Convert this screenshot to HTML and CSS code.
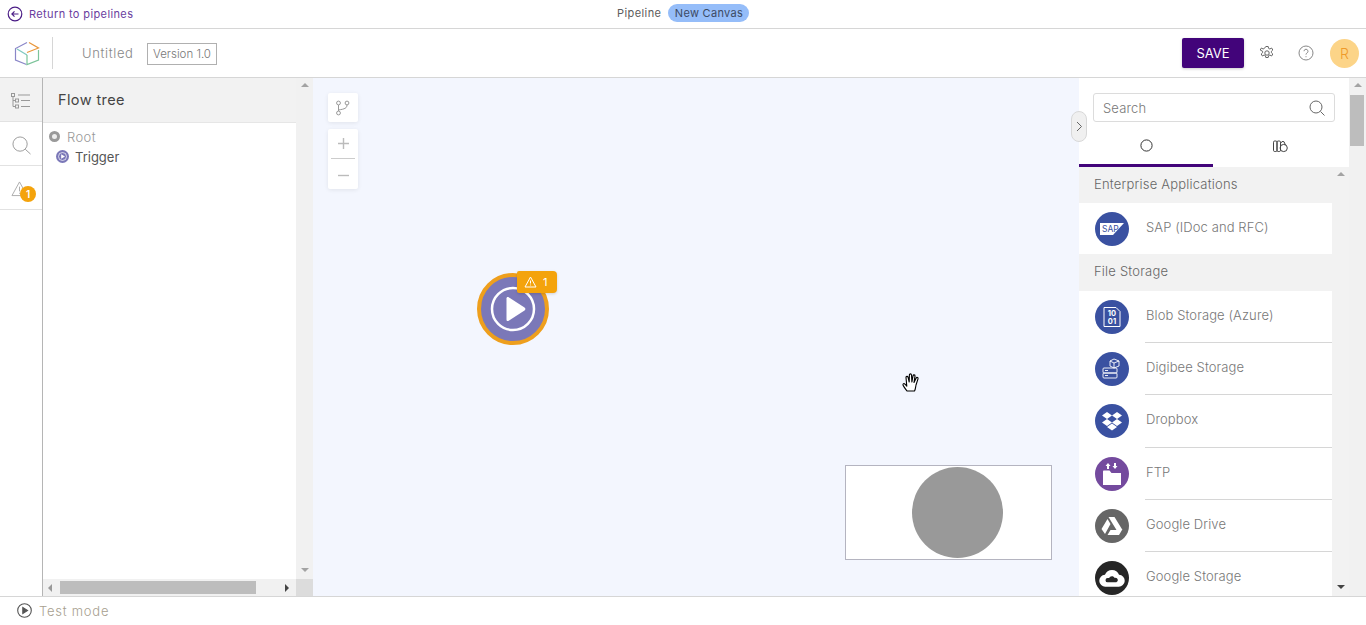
FILE: index.html
```html
<!DOCTYPE html>
<html>
<head>
    <meta charset="UTF-8">
    <title>Pipeline - New Canvas</title>
    <link rel="stylesheet" href="styles.css">
</head>
<body>
    <div class="topbar">
        <a class="back" href="#">
            <svg width="16" height="16" viewBox="0 0 16 16" fill="none" stroke="#4b1d86" stroke-width="1.2"><circle cx="8" cy="8" r="6.8"/><path d="M11.5 8H5M7.5 5.4 4.9 8l2.6 2.6"/></svg>
            <span>Return to pipelines</span>
        </a>
        <div class="crumb">
            <span>Pipeline</span>
            <span class="pill">New Canvas</span>
        </div>
    </div>

    <div class="header">
        <div class="logo">
            <svg width="26" height="25" viewBox="0 0 26 25" fill="none" stroke-width="1.2">
                <path d="M13 1.500 1.500 7.500V19L12.500 23.500" stroke="#8a86c8"/>
                <path d="M3 8l10 6" stroke="#7fc8c0"/>
                <path d="M13 14v9.500L24.500 19V9" stroke="#7cc49a"/>
                <path d="M15 1.500 24.500 7 13 11.500" stroke="#e8963a"/>
            </svg>
        </div>
        <span class="title">Untitled</span>
        <span class="version">Version 1.0</span>
        <div class="header-right">
            <button class="save">SAVE</button>
            <svg class="gear" width="16" height="16" viewBox="0 0 16 16" fill="none" stroke="#666" stroke-width="1"><circle cx="8" cy="8" r="2.2"/><path d="M6.8 1.5h2.4l.4 1.9 1.3.6 1.7-1 1.2 2-1.4 1.3v1.4l1.4 1.3-1.2 2-1.7-1-1.3.6-.4 1.9H6.8l-.4-1.9-1.3-.6-1.7 1-1.2-2 1.4-1.3V6.3L1.2 5l1.2-2 1.7 1 1.3-.6z"/></svg>
            <svg class="help" width="16" height="16" viewBox="0 0 16 16" fill="none" stroke="#888" stroke-width="1"><circle cx="8" cy="8" r="7"/><path d="M6 6.2a2 2 0 1 1 3 1.8c-.7.4-1 .8-1 1.6M8 11.2v1"/></svg>
            <span class="avatar">R</span>
        </div>
    </div>

    <div class="main">
        <div class="rail">
            <div class="rail-item active">
                <svg width="20" height="16" viewBox="0 0 20 16" fill="none" stroke="#999" stroke-width="1"><rect x="0.5" y="0.5" width="3" height="3"/><rect x="4.5" y="6" width="3" height="3"/><rect x="4.5" y="12" width="3" height="3"/><path d="M2 4v9.500h2.500M2 7.500h2.500M7 2h12M10 7.500h9M10 13.500h9"/></svg>
            </div>
            <div class="rail-item search-item">
                <svg width="19" height="19" viewBox="0 0 20 20" fill="none" stroke="#999" stroke-width="1"><circle cx="8.500" cy="8.500" r="7.500"/><path d="M14 14l5.500 5"/></svg>
            </div>
            <div class="rail-item warn">
                <svg width="17" height="16" viewBox="0 0 18 17" fill="none" stroke="#aaa" stroke-width="1"><path d="M9 1 1 15.500h16zM9 6v5M9 12.500v1"/></svg>
                <span class="rail-badge">1</span>
            </div>
        </div>

        <div class="tree-panel">
            <div class="tree-body">
                <div class="tree-head">Flow tree</div>
                <div class="tree-list">
                    <div class="tree-row root"><span class="dot-root"></span>Root</div>
                    <div class="tree-row trigger">
                        <svg width="13" height="13" viewBox="0 0 13 13"><circle cx="6.500" cy="6.500" r="6.500" fill="#7b78b8"/><circle cx="6.500" cy="6.500" r="4" fill="none" stroke="#fff" stroke-width=".7"/><path d="M5.200 4.200v4.600l3.800-2.300z" fill="#fff"/></svg>
                        Trigger
                    </div>
                </div>
                <div class="hscroll">
                    <span class="arrow-left"></span>
                    <span class="hthumb"></span>
                    <span class="arrow-right"></span>
                </div>
            </div>
            <div class="vscroll">
                <span class="arrow-up"></span>
                <span class="arrow-down"></span>
            </div>
        </div>

        <div class="canvas">
            <div class="tool tool-branch">
                <svg width="16" height="16" viewBox="0 0 16 16" fill="none" stroke="#999" stroke-width="1"><circle cx="3.500" cy="3" r="1.900"/><circle cx="12" cy="3" r="1.900"/><circle cx="3.500" cy="13" r="1.900"/><path d="M3.500 5v6M12 5c0 3-2 4-8.500 5"/></svg>
            </div>
            <div class="tool tool-zoom">
                <span class="zoom-btn">
                    <svg width="13" height="13" viewBox="0 0 13 13" stroke="#bbb" stroke-width="1.400"><path d="M6.500 1v11M1 6.500h11"/></svg>
                </span>
                <span class="zoom-line"></span>
                <span class="zoom-btn minus">
                    <svg width="13" height="13" viewBox="0 0 13 13" stroke="#bbb" stroke-width="1.400"><path d="M1 6.500h11"/></svg>
                </span>
            </div>

            <div class="node">
                <svg width="72" height="72" viewBox="0 0 72 72">
                    <circle cx="36" cy="36" r="34" fill="#7b78b8" stroke="#ee9f1d" stroke-width="4"/>
                    <circle cx="36" cy="36" r="21" fill="none" stroke="#fff" stroke-width="2.500"/>
                    <path d="M29.500 25.500c0-1.500 1-2 2.200-1.300l15.800 10.200c1.200.8 1.200 2.200 0 3L31.700 47.800c-1.200.7-2.200.2-2.200-1.300z" fill="#fff"/>
                </svg>
                <span class="node-badge">
                    <svg width="13" height="12" viewBox="0 0 13 12" fill="none" stroke="#fff" stroke-width="1"><path d="M6.500 1 1 11h11zM6.500 4.500v3M6.500 8.600v.8"/></svg>
                    1
                </span>
            </div>

            <div class="minimap"><span class="minimap-node"></span></div>

            <svg class="hand" width="20" height="22" viewBox="0 0 20 22">
                <path d="M5 19c-1.500-2-3.500-4.500-4-6-.3-1.200 1-1.800 2-.8l1.800 2L4 5.500c-.1-1.400 1.800-1.600 2.100-.2L7.200 10 7.400 3c0-1.500 2-1.500 2.100 0l.4 7 1.100-6.200c.3-1.400 2.200-1.100 2 .3L12 10.500l2.200-4.500c.6-1.200 2.300-.5 1.800.8L14 13c-.4 2-.6 4.500-1.500 6z" fill="#fff" stroke="#000" stroke-width="1.100" stroke-linejoin="round"/>
            </svg>
        </div>

        <div class="side">
            <button class="collapse">
                <svg width="7" height="11" viewBox="0 0 7 11" fill="none" stroke="#666" stroke-width="1"><path d="M1 1l4.500 4.500L1 10"/></svg>
            </button>
            <div class="side-inner">
                <div class="side-top">
                    <div class="search">
                        <span>Search</span>
                        <svg width="16" height="16" viewBox="0 0 16 16" fill="none" stroke="#666" stroke-width="1"><circle cx="7" cy="7" r="6"/><path d="M11.500 11.500l4 4"/></svg>
                    </div>
                    <div class="tabs">
                        <div class="tab active">
                            <svg width="13" height="13" viewBox="0 0 13 13" fill="none" stroke="#333" stroke-width="1"><circle cx="6.500" cy="6.500" r="5.600"/></svg>
                        </div>
                        <div class="tab">
                            <svg width="15" height="13" viewBox="0 0 15 13" fill="none" stroke="#444" stroke-width="1"><rect x="0.500" y="1" width="3.500" height="10.500" rx="1.200"/><rect x="4" y="1" width="3.500" height="10.500" rx="1.200"/><circle cx="10.700" cy="8" r="3.600"/><path d="M7.500 3.500l1.500-2 2 .2 1.500 3.500"/></svg>
                        </div>
                    </div>
                </div>
                <div class="list-wrap">
                    <div class="list">
                        <div class="group">Enterprise Applications</div>
                        <div class="item last">
                            <span class="icon blue"><svg width="24" height="14" viewBox="0 0 24 14"><path d="M0 1h24L13 13H0z" fill="#fff"/></svg><b class="sap">SAP</b></span>
                            <span class="label">SAP (IDoc and RFC)</span>
                        </div>
                        <div class="group second">File Storage</div>
                        <div class="item">
                            <span class="icon blue">
                                <svg width="20" height="22" viewBox="0 0 20 22" fill="none" stroke="#fff" stroke-width="1"><path d="M2 1.500h12l4 4v15H2z"/><text x="10" y="10" fill="#fff" stroke="none" font-size="7.500" font-weight="700" text-anchor="middle">10</text><text x="10" y="17.500" fill="#fff" stroke="none" font-size="7.500" font-weight="700" text-anchor="middle">01</text></svg>
                            </span>
                            <span class="label">Blob Storage (Azure)</span>
                        </div>
                        <div class="item">
                            <span class="icon blue">
                                <svg width="20" height="22" viewBox="0 0 20 22" fill="none" stroke="#fff" stroke-width=".9"><path d="M12 1l5 2v5l-5 2-4-2V3zM8 3l4 2 5-2M12 5v5"/><rect x="1" y="10" width="14" height="5" rx="1"/><rect x="1" y="15" width="14" height="5" rx="1"/><path d="M3 12.500h3M3 17.500h3"/></svg>
                            </span>
                            <span class="label">Digibee Storage</span>
                        </div>
                        <div class="item">
                            <span class="icon blue">
                                <svg width="22" height="20" viewBox="0 0 22 20" fill="#fff"><path d="M6 1 1 4.500 6 8l5-3.500zM16 1l-5 3.500L16 8l5-3.500zM1 11.500 6 15l5-3.500L6 8zM16 8l-5 3.500 5 3.500 5-3.500zM6 16l5 3.500 5-3.500-5-3.500z"/></svg>
                            </span>
                            <span class="label">Dropbox</span>
                        </div>
                        <div class="item">
                            <span class="icon purple">
                                <svg width="22" height="24" viewBox="0 0 22 24" fill="#fff"><path d="M2 9.500c0-.5.300-1 1-1h5.500l2 2.500H20v12H2z"/><path d="M7 1 4.500 4H6v3h2V4h1.500zM14 7l2.500-3H15V1h-2v3h-1.500z"/></svg>
                            </span>
                            <span class="label">FTP</span>
                        </div>
                        <div class="item">
                            <span class="icon gray">
                                <svg width="22" height="20" viewBox="0 0 22 20" fill="#fff"><path d="M7.500 1h6l8 13h-6zM6.500 3l3 5L4 18l-3.500-5zM9.500 14H21l-3 5H6.500z"/></svg>
                            </span>
                            <span class="label">Google Drive</span>
                        </div>
                        <div class="item">
                            <span class="icon black">
                                <svg width="26" height="20" viewBox="0 0 24 18"><path d="M6 17a5.500 5.500 0 0 1-.5-11A7 7 0 0 1 18.500 6 5.500 5.500 0 0 1 18 17z" fill="#fff"/><path d="M8 13a2 2 0 0 1 0-4h1.500c.3-2 4-2.500 5 0a2 2 0 0 1 1.500 4z" fill="#262626"/></svg>
                            </span>
                            <span class="label">Google Storage</span>
                        </div>
                    </div>
                    <div class="list-scroll">
                        <span class="arrow-up"></span>
                        <span class="arrow-down dark"></span>
                    </div>
                </div>
            </div>
            <div class="side-scroll">
                <span class="arrow-up"></span>
                <span class="side-thumb"></span>
            </div>
        </div>
    </div>

    <div class="footer">
        <svg width="15" height="15" viewBox="0 0 15 15" fill="none" stroke="#555" stroke-width="1.100"><circle cx="7.500" cy="7.500" r="6.800"/><path d="M5.800 4.500v6l4.700-3z" fill="#555"/></svg>
        <span>Test mode</span>
    </div>
</body>
</html>
```

FILE: styles.css
```css
* { box-sizing: border-box; }
html, body { margin: 0; height: 625px; overflow: hidden; }
body {
    font-family: "Inter", "Noto Sans", sans-serif;
    font-size: 13px;
    font-weight: 300;
    color: #777;
    background: #fff;
    display: flex;
    flex-direction: column;
}
svg { display: block; flex: none; }
a { text-decoration: none; }

/* top strip */
.topbar {
    height: 29px;
    border-bottom: 1px solid #d6d6d6;
    display: flex;
    align-items: center;
    position: relative;
    flex: none;
}
.back {
    display: flex;
    align-items: center;
    gap: 6px;
    padding-left: 7px;
    color: #6a3d9e;
    font-size: 11px;
    font-weight: 400;
    letter-spacing: .38px;
}
.crumb {
    position: absolute;
    left: 617px;
    top: 4px;
    display: flex;
    align-items: center;
    gap: 7px;
    font-size: 11px;
    font-weight: 400;
    letter-spacing: .42px;
    color: #5c5c5c;
}
.pill {
    background: #95bdf9;
    color: #3c4a63;
    border-radius: 9px;
    height: 18px;
    width: 81px;
    line-height: 18px;
    text-align: center;
    letter-spacing: .3px;
}

/* header */
.header {
    height: 49px;
    border-bottom: 1px solid #d6d6d6;
    display: flex;
    align-items: center;
    flex: none;
}
.logo {
    width: 53px;
    height: 32px;
    border-right: 1px solid #d6d6d6;
    padding: 4px 0 0 14px;
}
.title { width: 51px; margin-left: 29px; font-size: 13px; color: #888; letter-spacing: .65px; white-space: nowrap; }
.version {
    margin-left: 14px;
    width: 70px;
    height: 22px;
    border: 1px solid #b0b0b0;
    font-size: 11.5px;
    line-height: 20px;
    text-align: center;
    color: #777;
    position: relative;
    top: 1px;
}
.header-right { margin-left: auto; display: flex; align-items: center; padding-right: 7px; }
.save {
    width: 62px;
    height: 30px;
    background: #42047a;
    border: 0;
    border-radius: 2px;
    color: #fff;
    font: 400 13px "Inter", sans-serif;
    box-shadow: 0 1px 3px rgba(0,0,0,.2);
}
.gear { margin-left: 15px; }
.help { margin-left: 23px; }
.avatar {
    margin-left: 16px;
    width: 29px;
    height: 29px;
    border-radius: 50%;
    background: #fcd488;
    color: #ef9a2a;
    font-size: 14px;
    line-height: 29px;
    text-align: center;
}

/* main row */
.main { height: 518px; display: flex; flex: none; }

.rail { width: 43px; border-right: 1px solid #b5b5b5; flex: none; }
.rail-item {
    height: 44px;
    display: flex;
    align-items: center;
    justify-content: center;
    border-bottom: 1px solid #e2e2e2;
    position: relative;
}
.rail-item.active { background: #f2f2f2; padding-top: 2px; }
.search-item { padding-top: 4px; }
.warn { padding: 3px 4px 0 0; }
.rail-badge {
    position: absolute;
    left: 20px;
    top: 20px;
    width: 16px;
    height: 16px;
    border-radius: 50%;
    background: #f4a30c;
    color: #fff;
    font-size: 10px;
    font-weight: 600;
    line-height: 16px;
    text-align: center;
}

.tree-panel { width: 270px; display: flex; flex: none; }
.tree-body { width: 253px; display: flex; flex-direction: column; }
.tree-head {
    height: 45px;
    background: #f2f2f2;
    border-bottom: 1px solid #e6e6e6;
    padding-left: 15px;
    font-size: 14.5px;
    font-weight: 400;
    letter-spacing: .4px;
    line-height: 44px;
    color: #444;
    flex: none;
}
.tree-list { flex: 1; padding-top: 5px; }
.tree-row { height: 19px; display: flex; align-items: center; font-size: 13px; }
.root { padding-left: 6px; color: #999; gap: 7px; letter-spacing: .4px; position: relative; top: -1px; }
.dot-root {
    width: 11px;
    height: 11px;
    border-radius: 50%;
    border: 3px solid #9a9a9a;
    background: #eee;
}
.trigger { padding-left: 13px; gap: 6px; color: #555; font-weight: 400; }

.hscroll { height: 17px; background: #f1f1f1; display: flex; align-items: center; flex: none; }
.arrow-left {
    margin-left: 5px;
    border: 4px solid transparent;
    border-left: 0;
    border-right: 4px solid #999;
}
.hthumb { margin-left: 8px; width: 196px; height: 13px; background: #bdbdbd; }
.arrow-right {
    margin-left: 29px;
    border: 4px solid transparent;
    border-right: 0;
    border-left: 4px solid #444;
}
.vscroll {
    width: 17px;
    background: #f1f1f1;
    position: relative;
}
.arrow-up, .arrow-down {
    position: absolute;
    left: 5px;
    border: 4px solid transparent;
}
.arrow-up { top: 5px; border-top: 0; border-bottom: 4px solid #a3a3a3; }
.arrow-down { bottom: 24px; border-bottom: 0; border-top: 4px solid #a3a3a3; }
.vscroll::after {
    content: "";
    position: absolute;
    left: 0;
    bottom: 0;
    width: 17px;
    height: 17px;
    background: #dcdcdc;
}

/* canvas */
.canvas { flex: 1; background: #f3f6fe; position: relative; }
.tool {
    position: absolute;
    left: 15px;
    width: 30px;
    background: #fff;
    border-radius: 2px;
    box-shadow: 0 1px 4px rgba(0,0,0,.08);
}
.tool-branch {
    top: 15px;
    height: 29px;
    display: flex;
    align-items: center;
    justify-content: center;
}
.tool-zoom { top: 51px; height: 60px; }
.zoom-btn { height: 29px; display: flex; align-items: center; justify-content: center; }
.zoom-btn.minus { padding-top: 4px; }
.zoom-line { display: block; height: 1px; margin: 0 3px; background: #ccc; }
.node { position: absolute; left: 164px; top: 195px; width: 72px; height: 72px; }
.node-badge {
    position: absolute;
    left: 40px;
    top: -2px;
    width: 40px;
    height: 22px;
    background: #f4a30c;
    border-radius: 2px 4px 4px 2px;
    color: #fff;
    font-size: 11px;
    font-weight: 400;
    display: flex;
    align-items: center;
    gap: 6px;
    padding-left: 7px;
    box-shadow: 0 1px 3px rgba(0,0,0,.15);
}
.minimap {
    position: absolute;
    left: 532px;
    top: 387px;
    width: 207px;
    height: 95px;
    background: #fff;
    border: 1px solid #b4b4c0;
}
.minimap-node {
    position: absolute;
    left: 66px;
    top: 1px;
    width: 91px;
    height: 91px;
    border-radius: 50%;
    background: #999;
}
.hand { position: absolute; left: 589px; top: 294px; }

/* right side */
.side { width: 287px; display: flex; position: relative; flex: none; background: #fff; }
.collapse {
    position: absolute;
    left: -8px;
    top: 33px;
    width: 16px;
    height: 31px;
    padding: 0 0 0 4px;
    background: #f0f0f0;
    border: 1px solid #d8d8d8;
    border-radius: 8px;
    z-index: 1;
}
.side-inner { width: 270px; display: flex; flex-direction: column; }
.side-top { height: 89px; flex: none; }
.search {
    margin: 15px 0 0 14px;
    width: 242px;
    height: 29px;
    border: 1px solid #dcdcdc;
    border-radius: 3px;
    display: flex;
    align-items: center;
    justify-content: space-between;
    padding: 0 9px 0 9px;
    color: #777;
    letter-spacing: .15px;
}
.tabs { display: flex; margin-top: 8px; }
.tab {
    width: 134px;
    height: 37px;
    display: flex;
    align-items: center;
    justify-content: center;
    padding-bottom: 4px;
}
.tab.active { border-bottom: 3px solid #42047a; }

.list-wrap { flex: 1; display: flex; min-height: 0; background: #f2f2f2; }
.list { width: 253px; overflow: hidden; }
.group {
    height: 36px;
    line-height: 34px;
    padding-left: 15px;
    font-size: 13px;
    letter-spacing: .2px;
    color: #666;
}
.group.second { height: 37px; line-height: 35px; }
.item {
    height: 52.200px;
    background: #fff;
    display: flex;
    align-items: center;
    padding-left: 16px;
    position: relative;
}
.item::after {
    content: "";
    position: absolute;
    left: 66px;
    right: 0;
    bottom: 0;
    height: 1px;
    background: #d6d6d6;
}
.item.last { height: 51px; }
.item.last::after { display: none; }
.icon {
    width: 34px;
    height: 34px;
    border-radius: 50%;
    display: flex;
    align-items: center;
    justify-content: center;
    position: relative;
    flex: none;
}
.blue { background: #3a51a1; }
.purple { background: #744a9e; }
.gray { background: #666; }
.black { background: #262626; }
.sap {
    position: absolute;
    left: 7px;
    top: 11px;
    font-size: 8.500px;
    line-height: 12px;
    color: #3a51a1;
}
.label { margin: 0 0 4px 17px; font-size: 13px; letter-spacing: .1px; color: #777; }
.list-scroll { width: 17px; position: relative; }
.list-scroll .arrow-down { bottom: 7px; }
.arrow-down.dark { border-top-color: #444; }

.side-scroll { width: 17px; background: #f1f1f1; position: relative; }
.side-thumb {
    position: absolute;
    left: 1px;
    top: 17px;
    width: 14px;
    height: 51px;
    background: #bdbdbd;
}

/* bottom */
.footer {
    height: 30px;
    border-top: 1px solid #d6d6d6;
    display: flex;
    align-items: center;
    gap: 7px;
    padding: 0 0 2px 17px;
    flex: none;
    color: #a89f90;
    font-size: 13px;
    letter-spacing: .75px;
}
```
